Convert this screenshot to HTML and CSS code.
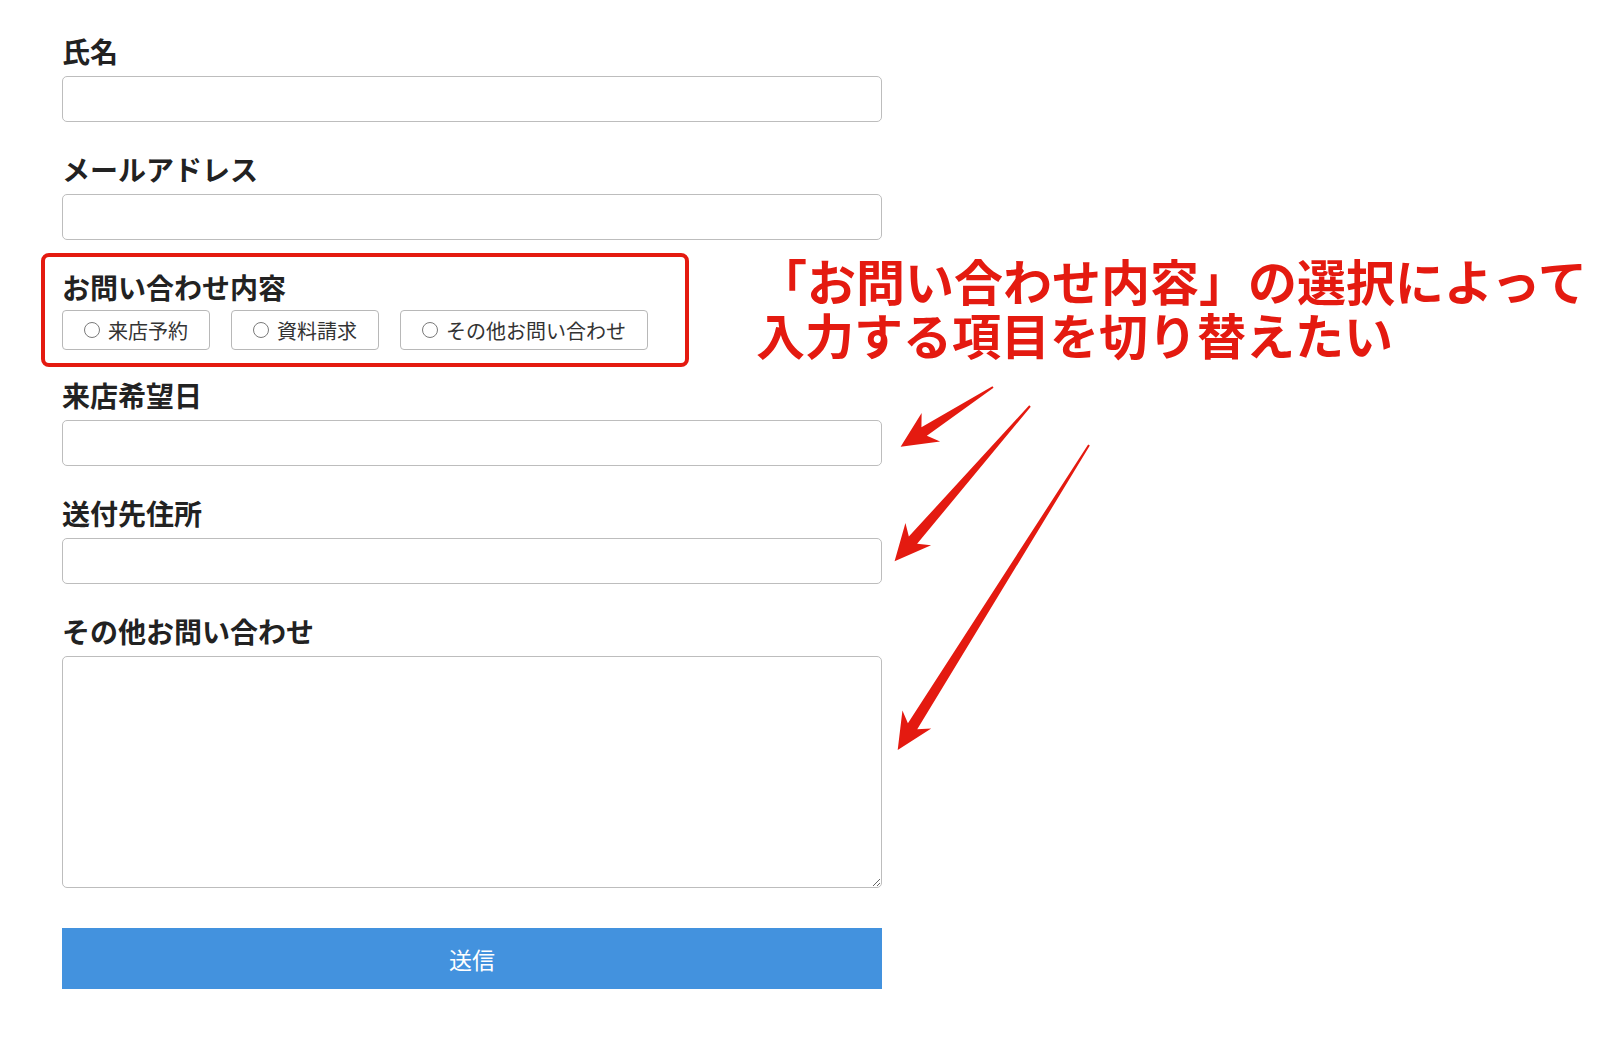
FILE: index.html
```html
<!DOCTYPE html>
<html lang="ja">
<head>
<meta charset="utf-8">
<title>お問い合わせフォーム</title>
<link rel="stylesheet" href="styles.css">
</head>
<body>
<form class="form">
  <div class="group">
    <label class="label">氏名</label>
    <input class="field" type="text">
  </div>
  <div class="group">
    <label class="label">メールアドレス</label>
    <input class="field" type="email">
  </div>
  <div class="highlight">
    <div class="label">お問い合わせ内容</div>
    <div class="choices">
      <label class="choice"><input class="radio" type="radio" name="kind">来店予約</label>
      <label class="choice"><input class="radio" type="radio" name="kind">資料請求</label>
      <label class="choice"><input class="radio" type="radio" name="kind">その他お問い合わせ</label>
    </div>
  </div>
  <div class="group">
    <label class="label">来店希望日</label>
    <input class="field" type="text">
  </div>
  <div class="group">
    <label class="label">送付先住所</label>
    <input class="field" type="text">
  </div>
  <div class="group">
    <label class="label">その他お問い合わせ</label>
    <textarea class="field area"></textarea>
  </div>
  <button class="submit" type="button">送信</button>
</form>

<div class="note">
  <div class="note-line1">「お問い合わせ内容」の選択によって</div>
  <div class="note-line2">入力する項目を切り替えたい</div>
</div>

<svg class="arrows" width="1600" height="1045" viewBox="0 0 1600 1045">
  <polygon fill="#e41a10" transform="translate(993 387) rotate(147.1)" points="0,-1 82,-5 74,-17 110,0 74,17 82,5 0,1"/>
  <polygon fill="#e41a10" transform="translate(1030 406) rotate(131.1)" points="0,-1 178,-5.5 170,-17 206,0 170,17 178,5.5 0,1"/>
  <polygon fill="#e41a10" transform="translate(1089 445) rotate(122.1)" points="0,-1 332,-5.5 324,-17 360,0 324,17 332,5.5 0,1"/>
</svg>
</body>
</html>
```

FILE: styles.css
```css
html, body {
  margin: 0;
  padding: 0;
  background: #ffffff;
}

body {
  width: 1600px;
  height: 1045px;
  overflow: hidden;
  position: relative;
  font-family: "Noto Sans CJK JP", "Noto Sans", sans-serif;
  color: #222222;
}

.form {
  width: 820px;
  padding: 33px 0 0 62px;
  display: flex;
  flex-direction: column;
}

.group {
  display: flex;
  flex-direction: column;
  margin-bottom: 29px;
}

.label {
  display: block;
  height: 36px;
  line-height: 36px;
  font-size: 28px;
  font-weight: 700;
  color: #222222;
  margin-bottom: 7px;
  white-space: nowrap;
}

.field {
  box-sizing: border-box;
  width: 820px;
  height: 46px;
  margin: 0;
  border: 1px solid #bdbdbd;
  border-radius: 5px;
  background: #ffffff;
  font-family: inherit;
  font-size: 18px;
  padding: 0 10px;
}

.area {
  height: 232px;
  padding: 8px 10px;
  display: block;
}

.highlight {
  box-sizing: border-box;
  width: 648px;
  margin: -16px 0 10px -21px;
  padding: 12px 0 13px 17px;
  border: 4px solid #e41a10;
  border-radius: 8px;
}

.highlight .label {
  margin-bottom: 5px;
}

.choices {
  display: flex;
  gap: 21px;
}

.choice {
  box-sizing: border-box;
  height: 40px;
  display: flex;
  align-items: center;
  padding: 0 21px;
  border: 1px solid #b8b8b8;
  border-radius: 4px;
  font-size: 20px;
  color: #333333;
  white-space: nowrap;
}

.radio {
  appearance: none;
  -webkit-appearance: none;
  box-sizing: border-box;
  width: 16px;
  height: 16px;
  margin: 0 8px 0 0;
  border: 1px solid #7a7a7a;
  border-radius: 50%;
  background: #ffffff;
}

.submit {
  box-sizing: border-box;
  width: 820px;
  height: 61px;
  margin-top: 11px;
  border: none;
  background: #4392de;
  color: #ffffff;
  font-family: inherit;
  font-size: 23px;
  font-weight: 400;
}

.note {
  position: absolute;
  left: 758px;
  top: 253px;
  color: #e41a10;
  font-size: 49px;
  font-weight: 700;
  line-height: 54px;
  white-space: nowrap;
}

.note-line2 {
  margin-left: -2px;
}

.arrows {
  position: absolute;
  left: 0;
  top: 0;
  pointer-events: none;
}
```
